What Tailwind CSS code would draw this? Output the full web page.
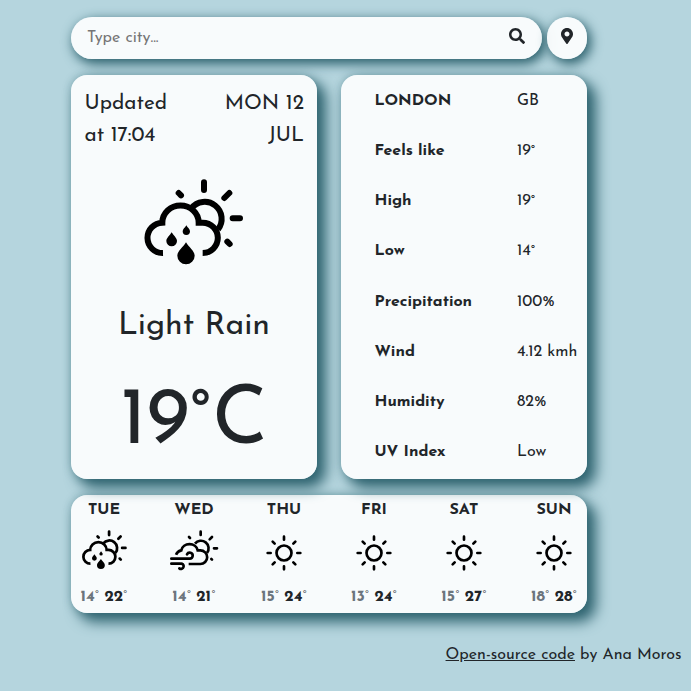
<!DOCTYPE html>
<html lang="en">
<head>
<meta charset="utf-8">
<title>Weather</title>
<script src="https://cdn.jsdelivr.net/npm/@tailwindcss/browser@4"></script>
</head>
<body class="h-[691px] overflow-hidden bg-[#b5d5de] font-['Josefin_Sans',Lato,sans-serif] text-[#212529]">
<svg class="hidden">
  <symbol id="rain" viewBox="0 0 390 330">
    <g fill="none" stroke="#000" stroke-width="18">
      <path d="M99 249A45.5 45.5 0 1 1 97 158A53 50 0 0 1 206 158H218A45.5 45.5 0 0 1 218 249"/>
      <path d="M184 115A49 49 0 0 1 264 178"/>
      <path stroke-linecap="round" d="M222 37V60M298 69L283 84M308 145H330M292 215L299 222M146 69L153 76"/>
    </g>
    <path d="M125 187C120 196 109 204 109 213A16 16 0 0 0 141 213C141 204 130 196 125 187ZM169 166C165 173 158 178 158 184A11 11 0 0 0 180 184C180 178 173 173 169 166ZM168 217C160 231 142 243 142 257A26 26 0 0 0 194 257C194 243 176 231 168 217Z"/>
  </symbol>
  <symbol id="wind" viewBox="0 0 180 150">
    <g fill="none" stroke="#000" stroke-width="8">
      <path d="M33 89C37 79 43 77 49 76A25 23 0 0 1 98 76H106A20.500 20.500 0 0 1 106 117H71"/>
      <path d="M90 56A22 22 0 0 1 126 84"/>
      <path stroke-linecap="round" d="M107 20V30M141 36L134 43M147 70H156M139 102L141 104M72 36L75 39M19 101H74A9 9 0 1 0 66 88M19 116H46A8 8 0 1 1 43 130"/>
    </g>
  </symbol>
  <symbol id="sun" viewBox="0 0 120 120">
    <g fill="none" stroke="#000" stroke-width="8">
      <circle cx="60" cy="60" r="22.500"/>
      <path stroke-linecap="round" d="M60 11V20M60 100V109M11 60H20M100 60H109M26 26L32 32M88 88L94 94M94 26L88 32M32 88L26 94"/>
    </g>
  </symbol>
</svg>
<main class="ml-[71px] w-[516px] pt-[17px]">
  <form class="flex gap-[5px]">
    <div class="flex h-[42px] w-[471px] items-center justify-between rounded-[21px] bg-white/90 pr-[17px] pl-4 shadow-[3px_4px_12px_1px_#2a5f6b]">
      <span class="text-[16px] text-[#757575]">Type city...</span>
      <svg class="mb-1 size-4" viewBox="0 0 512 512" fill="#212529"><path d="M505 442.700L405.300 343c-4.500-4.500-10.600-7-17-7H372c27.600-35.300 44-79.700 44-128C416 93.100 322.900 0 208 0S0 93.100 0 208s93.100 208 208 208c48.300 0 92.700-16.400 128-44v16.300c0 6.400 2.500 12.500 7 17l99.700 99.700c9.400 9.400 24.600 9.400 33.900 0l28.300-28.300c9.400-9.400 9.400-24.600.1-34zM208 336c-70.700 0-128-57.200-128-128 0-70.700 57.200-128 128-128 70.700 0 128 57.200 128 128 0 70.700-57.200 128-128 128z"/></svg>
    </div>
    <div class="flex h-[42px] w-10 items-center justify-center rounded-[20px] bg-white/90 shadow-[3px_4px_12px_1px_#2a5f6b]">
      <svg class="mb-1 h-4 w-3" viewBox="0 0 384 512" fill="#212529"><path d="M172.300 501.700C27 291 0 269.400 0 192 0 86 86 0 192 0s192 86 192 192c0 77.400-27 99-172.300 309.700-9.500 13.800-29.900 13.800-39.400 0zM192 272c44.200 0 80-35.800 80-80s-35.800-80-80-80-80 35.800-80 80 35.800 80 80 80z"/></svg>
    </div>
  </form>
  <div class="mt-4 flex gap-6">
    <section class="flex h-[404px] w-[246px] flex-col items-center rounded-2xl bg-white/90 shadow-[8px_8px_14px_1px_#2f6470,0_0_8px_0_#2f647066]">
      <div class="flex w-full justify-between pt-[13px] pr-[13px] pl-[13.5px] text-[20.800px] leading-8">
        <div>Updated<br>at 17:04</div>
        <div class="text-right">MON 12<br>JUL</div>
      </div>
      <svg class="mt-[18px] ml-[2px] h-[110px] w-[130px]"><use href="#rain"/></svg>
      <h2 class="mt-[28px] text-[32px] leading-[36px]">Light Rain</h2>
      <p class="mt-[34px] text-[80px] leading-[90px]">19°C</p>
    </section>
    <section class="grid h-[404px] w-[246px] grid-cols-[142.5px_1fr] grid-rows-8 items-center rounded-2xl bg-white/90 pt-[0.5px] pb-[1.5px] pl-[33.5px] text-[16px] shadow-[8px_8px_14px_1px_#2f6470,0_0_8px_0_#2f647066]">
      <b>LONDON</b><span>GB</span>
      <b>Feels like</b><span>19°</span>
      <b>High</b><span>19°</span>
      <b>Low</b><span>14°</span>
      <b>Precipitation</b><span>100%</span>
      <b>Wind</b><span>4.12 kmh</span>
      <b>Humidity</b><span>82%</span>
      <b>UV Index</b><span>Low</span>
    </section>
  </div>
  <section class="mt-4 flex h-[118px] gap-6 rounded-2xl bg-white/90 text-[16px] leading-6 shadow-[8px_8px_14px_1px_#2f6470,0_0_8px_0_#2f647066]">
    <div class="flex w-[66px] flex-col items-center pt-[3px]"><b>TUE</b><svg class="mt-[4px] ml-px h-[50px] w-[60px]"><use href="#rain"/></svg><div class="mt-[9px]"><b class="text-[#6c757d]">14</b><span class="font-light">°</span> <b>22</b><span class="font-light">°</span></div></div>
    <div class="flex w-[66px] flex-col items-center pt-[3px]"><b>WED</b><svg class="mt-[3px] mb-px ml-[2px] h-[50px] w-[60px]"><use href="#wind"/></svg><div class="mt-[9px]"><b class="text-[#6c757d]">14</b><span class="font-light">°</span> <b>21</b><span class="font-light">°</span></div></div>
    <div class="flex w-[66px] flex-col items-center pt-[3px]"><b>THU</b><svg class="mt-[11px] mb-[3px] size-10"><use href="#sun"/></svg><div class="mt-[9px]"><b class="text-[#6c757d]">15</b><span class="font-light">°</span> <b>24</b><span class="font-light">°</span></div></div>
    <div class="flex w-[66px] flex-col items-center pt-[3px]"><b>FRI</b><svg class="mt-[11px] mb-[3px] size-10"><use href="#sun"/></svg><div class="mt-[9px]"><b class="text-[#6c757d]">13</b><span class="font-light">°</span> <b>24</b><span class="font-light">°</span></div></div>
    <div class="flex w-[66px] flex-col items-center pt-[3px]"><b>SAT</b><svg class="mt-[11px] mb-[3px] size-10"><use href="#sun"/></svg><div class="mt-[9px]"><b class="text-[#6c757d]">15</b><span class="font-light">°</span> <b>27</b><span class="font-light">°</span></div></div>
    <div class="flex w-[66px] flex-col items-center pt-[3px]"><b>SUN</b><svg class="mt-[11px] mb-[3px] size-10"><use href="#sun"/></svg><div class="mt-[9px]"><b class="text-[#6c757d]">18</b><span class="font-light">°</span> <b>28</b><span class="font-light">°</span></div></div>
  </section>
</main>
<footer class="mt-[30px] pr-[9.5px] text-right text-[16px] leading-6"><a class="underline">Open-source code</a> by Ana Moros</footer>
</body>
</html>
